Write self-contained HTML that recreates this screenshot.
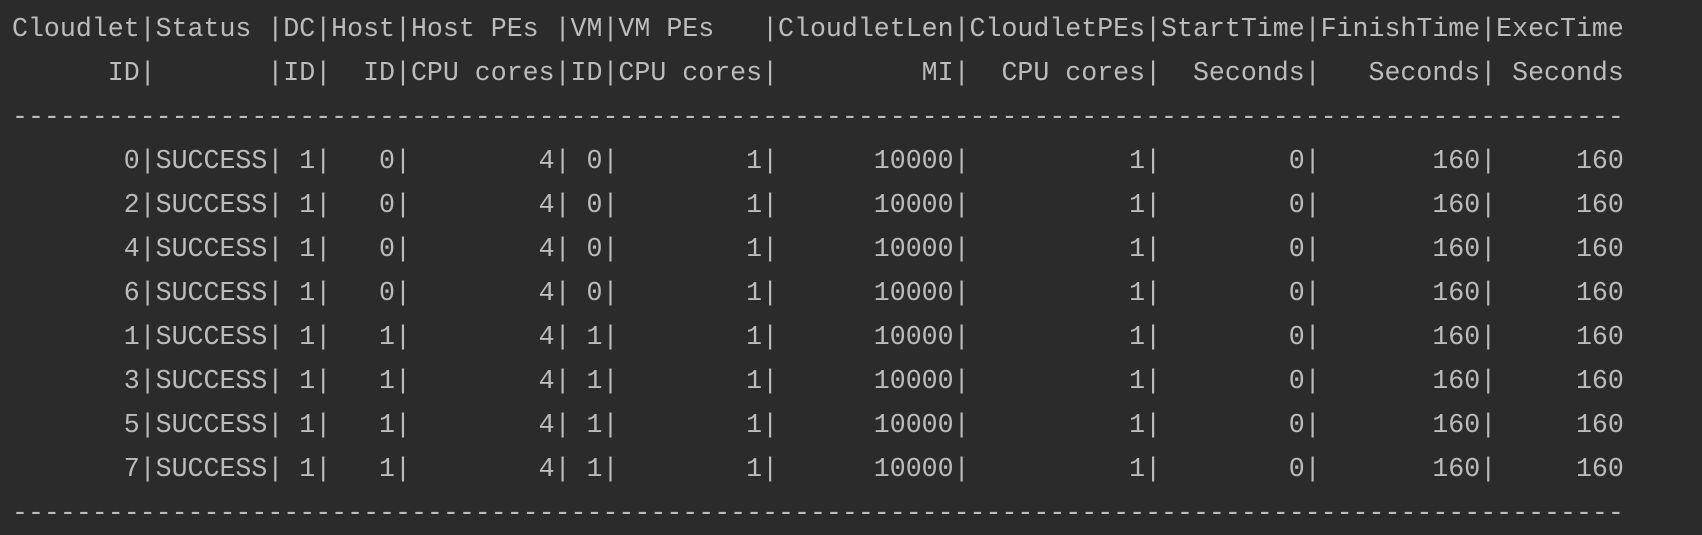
<!DOCTYPE html>
<html><head><meta charset="utf-8"><style>
html,body{margin:0;padding:0;background:#2b2b2b;width:1702px;height:528px;overflow:hidden}
pre{margin:0;position:absolute;left:12px;top:7px;font-family:"Liberation Mono",monospace;font-size:26.6px;line-height:44px;color:#bcbcbc}
</style></head><body><pre>Cloudlet|Status |DC|Host|Host PEs |VM|VM PEs   |CloudletLen|CloudletPEs|StartTime|FinishTime|ExecTime
      ID|       |ID|  ID|CPU cores|ID|CPU cores|         MI|  CPU cores|  Seconds|   Seconds| Seconds
-----------------------------------------------------------------------------------------------------
       0|SUCCESS| 1|   0|        4| 0|        1|      10000|          1|        0|       160|     160
       2|SUCCESS| 1|   0|        4| 0|        1|      10000|          1|        0|       160|     160
       4|SUCCESS| 1|   0|        4| 0|        1|      10000|          1|        0|       160|     160
       6|SUCCESS| 1|   0|        4| 0|        1|      10000|          1|        0|       160|     160
       1|SUCCESS| 1|   1|        4| 1|        1|      10000|          1|        0|       160|     160
       3|SUCCESS| 1|   1|        4| 1|        1|      10000|          1|        0|       160|     160
       5|SUCCESS| 1|   1|        4| 1|        1|      10000|          1|        0|       160|     160
       7|SUCCESS| 1|   1|        4| 1|        1|      10000|          1|        0|       160|     160
-----------------------------------------------------------------------------------------------------</pre></body></html>
